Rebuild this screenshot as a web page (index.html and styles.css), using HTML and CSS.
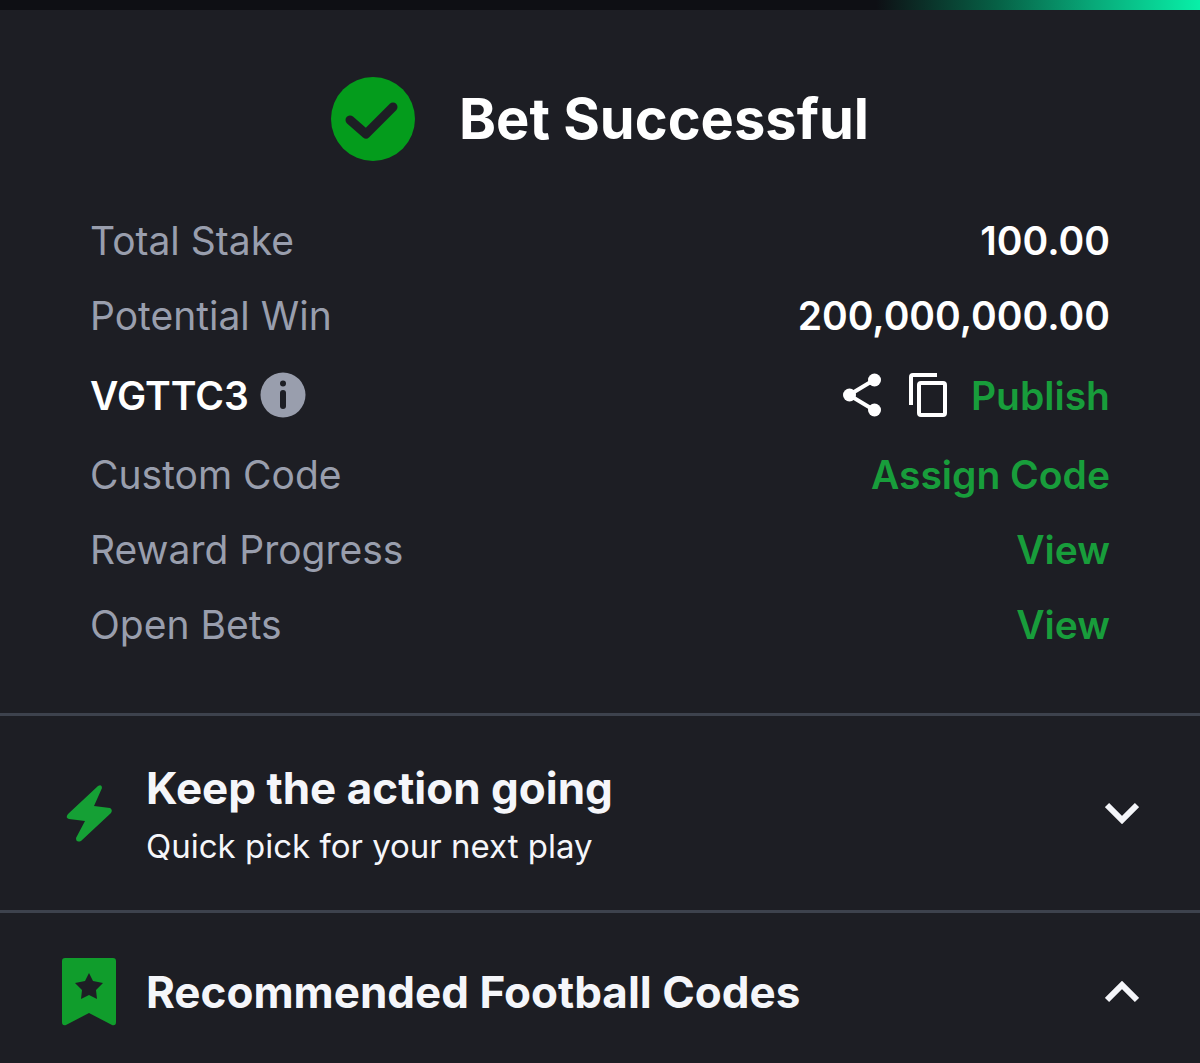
FILE: index.html
```html
<!DOCTYPE html>
<html lang="en">
<head>
  <meta charset="UTF-8" />
  <meta name="viewport" content="width=device-width, initial-scale=1.0"/>
  <title>Bet Successful</title>
  <link rel="stylesheet" href="styles.css">
</head>
<body>
  <div class="top-bar"></div>

  <main>
    <section class="summary">
      <header class="title">
        <svg class="check" viewBox="0 0 84 84" aria-hidden="true">
          <circle cx="42" cy="42" r="42" fill="#049c1c"/>
          <path d="M19 43 L35 57 L62 30" fill="none" stroke="#1d1e24" stroke-width="9" stroke-linecap="round" stroke-linejoin="round"/>
        </svg>
        <h1>Bet Successful</h1>
      </header>

      <div class="row">
        <span class="label">Total Stake</span>
        <span class="value">100.00</span>
      </div>
      <div class="row">
        <span class="label">Potential Win</span>
        <span class="value">200,000,000.00</span>
      </div>
      <div class="row code-row">
        <div class="code">
          <span class="value">VGTTC3</span>
          <button type="button" aria-label="Code info">
            <svg width="46" height="46" viewBox="0 0 46 46">
              <circle cx="23" cy="23" r="22.500" fill="#999ead"/>
              <circle cx="23" cy="11.500" r="3" fill="#1d1e24"/>
              <path d="M23 21 V34" stroke="#1d1e24" stroke-width="6" stroke-linecap="round"/>
            </svg>
          </button>
        </div>
        <div class="actions">
          <button type="button" aria-label="Share">
            <svg width="38" height="44" viewBox="0 0 38 44">
              <path d="M31 7 L6 22 L31 37" fill="none" stroke="#fff" stroke-width="4"/>
              <circle cx="31.500" cy="7" r="6.500" fill="#fff"/>
              <circle cx="6.500" cy="22" r="6.500" fill="#fff"/>
              <circle cx="31.500" cy="37" r="6.500" fill="#fff"/>
            </svg>
          </button>
          <button type="button" aria-label="Copy">
            <svg width="38" height="44" viewBox="0 0 38 44" fill="none" stroke="#fff" stroke-width="4">
              <path d="M2 32 V4 Q2 2 4 2 H28"/>
              <rect x="10" y="10" width="26" height="32" rx="2"/>
            </svg>
          </button>
          <a class="link" href="#">Publish</a>
        </div>
      </div>
      <div class="row">
        <span class="label">Custom Code</span>
        <a class="link" href="#">Assign Code</a>
      </div>
      <div class="row">
        <span class="label">Reward Progress</span>
        <a class="link" href="#">View</a>
      </div>
      <div class="row">
        <span class="label">Open Bets</span>
        <a class="link" href="#">View</a>
      </div>
    </section>

    <section class="panel quick">
      <svg class="panel-icon" viewBox="0 0 54 68" aria-hidden="true">
        <path d="M36 7 L6 35 Q3 39 7 40 L23 42 L14 59 Q14 64 19 62 L49 34 Q51 31 48 29 L32 27 L40 9 Q40 5 36 7 Z" fill="#15a035"/>
      </svg>
      <div class="panel-text">
        <h2>Keep the action going</h2>
        <p>Quick pick for your next play</p>
      </div>
      <button type="button" aria-label="Expand" aria-expanded="false">
        <svg width="34" height="22" viewBox="0 0 34 22">
          <path d="M2 3 L17 18 L32 3" fill="none" stroke="#f5f6fa" stroke-width="6"/>
        </svg>
      </button>
    </section>

    <section class="panel codes">
      <svg class="panel-icon" viewBox="0 0 54 68" aria-hidden="true">
        <path d="M3 0 H51 Q54 0 54 3 V64 Q54 68 50 67 L27 55 L4 67 Q0 68 0 64 V3 Q0 0 3 0 Z" fill="#109d2c"/>
        <path d="M27 15 L31 23 L41 25 L34 32 L35 41 L27 37 L19 41 L20 32 L13 25 L23 23 Z" fill="#1d1e24"/>
      </svg>
      <div class="panel-text">
        <h2>Recommended Football Codes</h2>
      </div>
      <button type="button" aria-label="Collapse" aria-expanded="true">
        <svg width="34" height="22" viewBox="0 0 34 22">
          <path d="M2 19 L17 4 L32 19" fill="none" stroke="#f5f6fa" stroke-width="6"/>
        </svg>
      </button>
    </section>
  </main>
</body>
</html>
```
FILE: styles.css
```css
* {
  box-sizing: border-box;
}
body {
  font-family: Inter, "Liberation Sans", sans-serif;
  background-color: #1d1e24;
  color: #ffffff;
  margin: 0;
}
h1, h2, p {
  margin: 0;
}
svg {
  display: block;
}
button {
  padding: 0;
  border: 0;
  background: none;
  cursor: pointer;
}
.top-bar {
  height: 10px;
  background: linear-gradient(to right, #0e0f14 73%, #066045 83%, #08a878 91%, #08f0a8);
}
.summary {
  padding: 67px 90px 51px;
}
.title {
  display: flex;
  justify-content: center;
  align-items: center;
  gap: 44px;
  margin-bottom: 42px;
}
.title h1 {
  font-size: 56px;
  line-height: 84px;
  font-weight: 700;
}
.check {
  width: 84px;
  height: 84px;
}
.row {
  display: flex;
  justify-content: space-between;
  align-items: center;
  height: 75px;
  font-size: 39px;
}
.code-row {
  height: 84px;
}
.label {
  color: #999ead;
}
.value {
  font-weight: 600;
}
.link {
  color: #189d3b;
  font-weight: 600;
  text-decoration: none;
}
.code {
  display: flex;
  align-items: center;
  gap: 11px;
}
.actions {
  display: flex;
  align-items: center;
  gap: 24px;
}
.actions button + button {
  margin-left: 4px;
}
.panel {
  display: flex;
  align-items: center;
  gap: 30px;
  padding: 0 61px 0 62px;
  border-top: 3px solid #3d424d;
  color: #f5f6fa;
}
.quick {
  padding-top: 36px;
  padding-bottom: 36px;
}
.quick .panel-text {
  padding-top: 6px;
}
.codes {
  padding-top: 45px;
  padding-bottom: 37px;
}
.panel-icon {
  width: 54px;
  height: 68px;
}
.panel-text {
  flex: 1;
}
.panel h2 {
  font-size: 44px;
  line-height: 60px;
  font-weight: 700;
}
.panel p {
  font-size: 33px;
  line-height: 56px;
}
```
